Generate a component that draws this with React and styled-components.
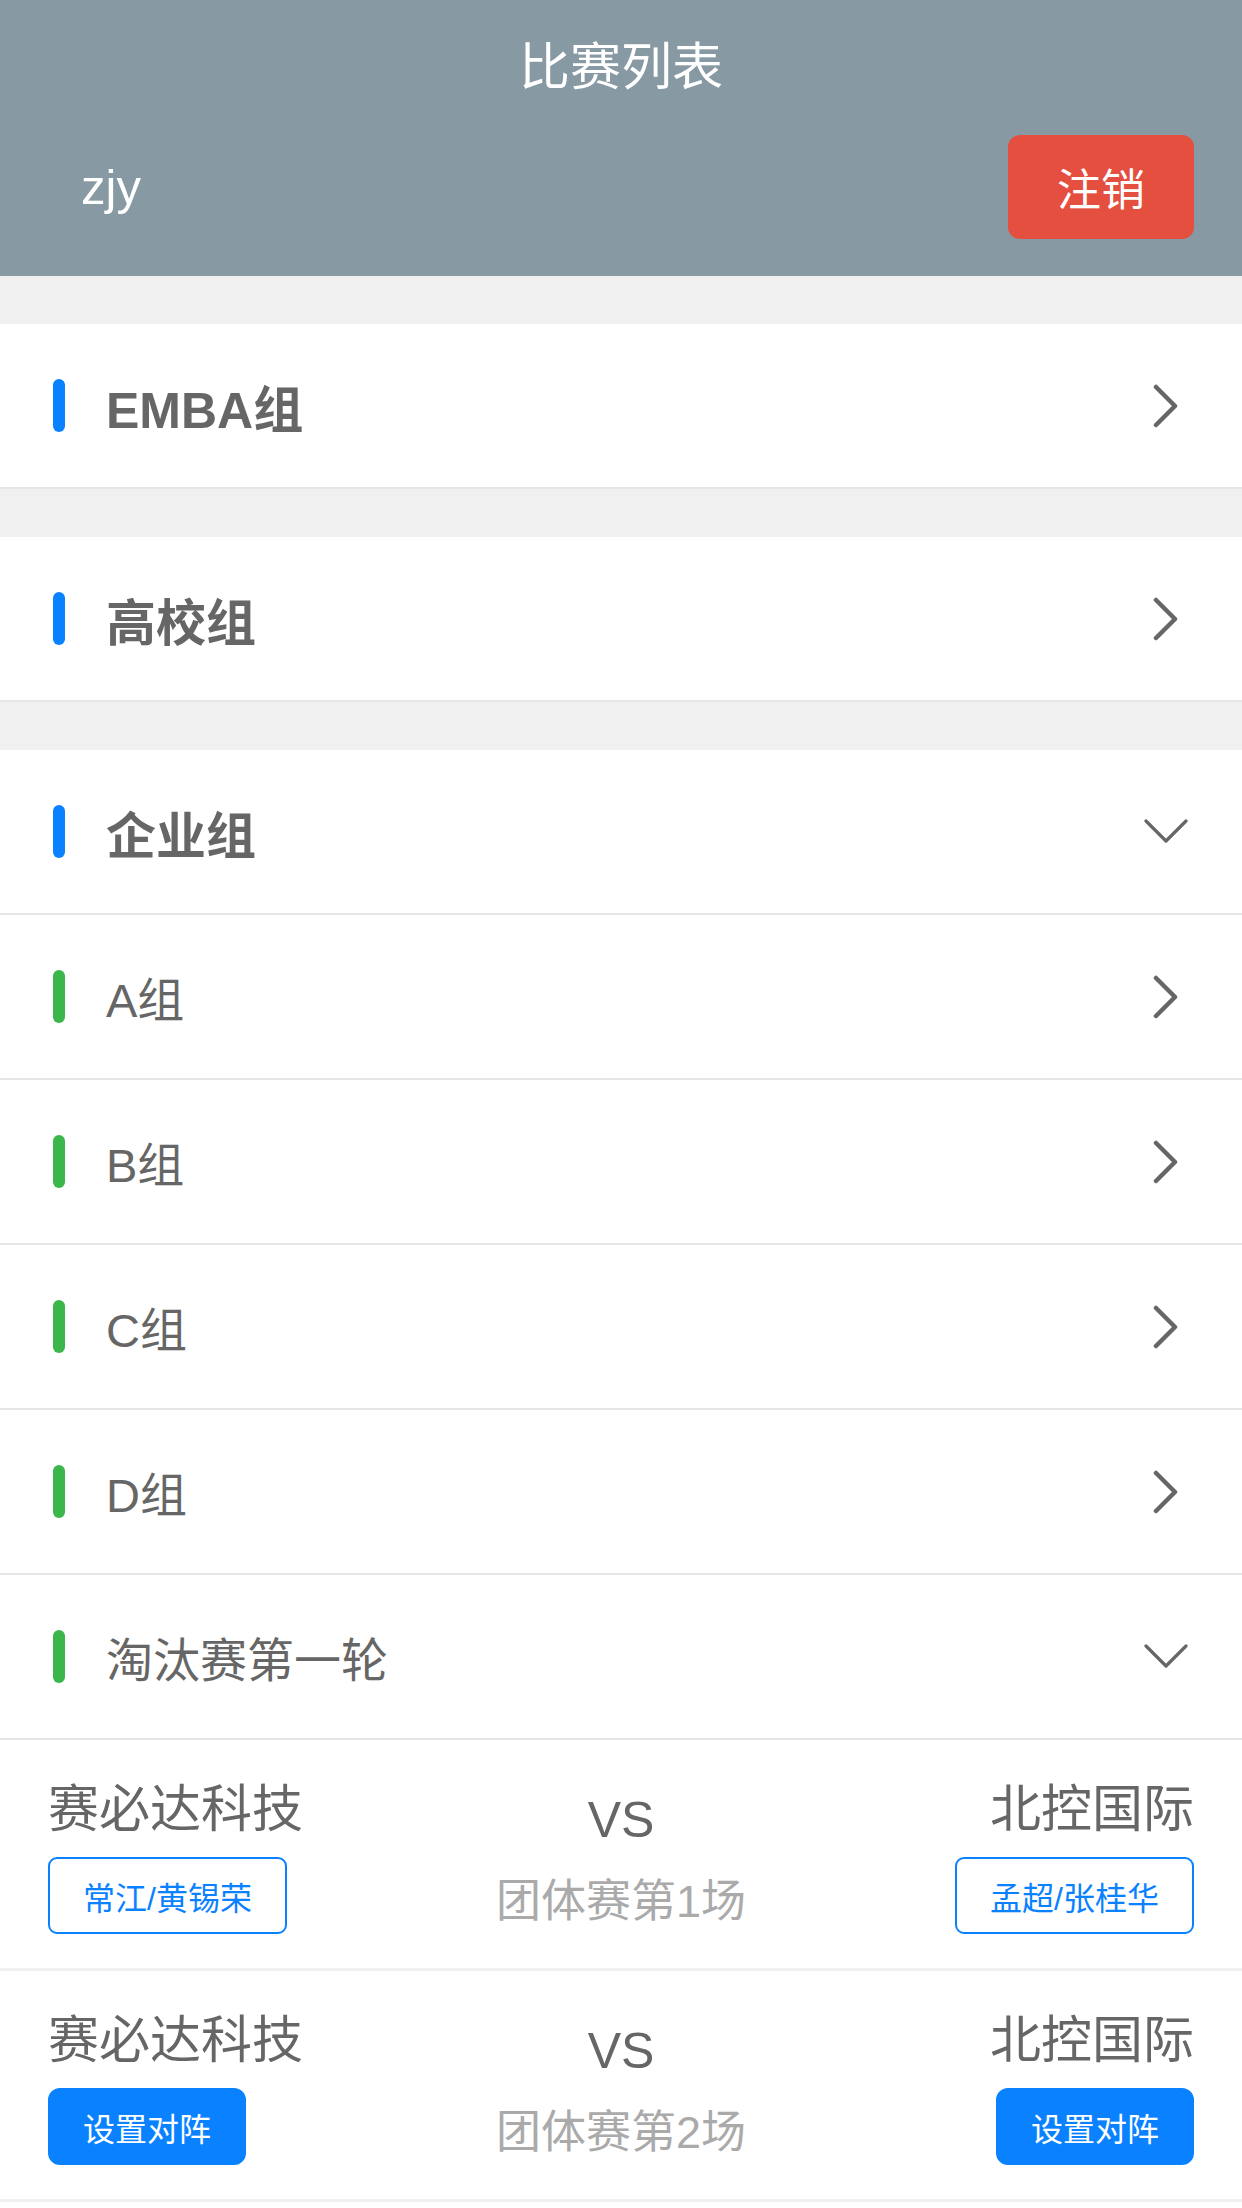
import styled, { createGlobalStyle } from 'styled-components';

const GlobalStyle = createGlobalStyle`
  * {
    box-sizing: border-box;
  }
  body {
    margin: 0;
    background: #ffffff;
    font-family: 'Liberation Sans', 'Noto Sans CJK SC', sans-serif;
  }
`;

const Header = styled.header`
  background-color: #8799a2;
  padding: 0 48px 37px;
  color: #ffffff;
`;

const Title = styled.h1`
  margin: 0;
  height: 135px;
  line-height: 135px;
  text-align: center;
  font-size: 51px;
  font-weight: 400;
`;

const UserBar = styled.div`
  display: flex;
  align-items: center;
  justify-content: space-between;
  height: 104px;
`;

const UserName = styled.div`
  margin-left: 33px;
  font-size: 49px;
`;

const LogoutButton = styled.button`
  width: 186px;
  height: 104px;
  border: none;
  border-radius: 12px;
  background-color: #e54f40;
  color: #ffffff;
  font-family: inherit;
  font-size: 44px;
  cursor: pointer;
`;

const Gap = styled.div`
  height: 48px;
  background-color: #f0f0f0;
`;

const Row = styled.div`
  display: flex;
  align-items: center;
  height: 165px;
  padding: 0 51px 0 53px;
  background-color: #ffffff;
  border-bottom: 2px solid #e6e6e6;
  cursor: pointer;
`;

const Bar = styled.span`
  width: 12px;
  height: 53px;
  border-radius: 6px;
  background-color: ${(p) => (p.$sub ? '#3bb64a' : '#0a82ff')};
`;

const RowLabel = styled.span`
  flex: 1;
  margin-left: 41px;
  color: #666666;
  font-size: ${(p) => (p.$sub ? '47px' : '50px')};
  font-weight: ${(p) => (p.$sub ? 400 : 700)};
`;

const IconBox = styled.span`
  display: flex;
  align-items: center;
  justify-content: center;
  width: 50px;
`;

const MatchRow = styled.div`
  display: grid;
  grid-template-columns: 1fr auto 1fr;
  padding: 40px 48px 34px;
  border-bottom: 3px solid #f0f0f0;
`;

const TeamCol = styled.div`
  display: flex;
  flex-direction: column;
  align-items: ${(p) => (p.$right ? 'flex-end' : 'flex-start')};
  gap: 17px;
`;

const TeamName = styled.div`
  font-size: 51px;
  line-height: 60px;
  color: #666666;
`;

const PlayerTag = styled.button`
  height: 77px;
  padding: 0 33px;
  font-family: inherit;
  font-size: 32px;
  border: 2px solid #0a82ff;
  background-color: ${(p) => (p.$filled ? '#0a82ff' : '#ffffff')};
  color: ${(p) => (p.$filled ? '#ffffff' : '#0a82ff')};
  border-radius: ${(p) => (p.$filled ? '12px' : '9px')};
  cursor: pointer;
`;

const CenterCol = styled.div`
  display: flex;
  flex-direction: column;
  align-items: center;
  padding-top: 10px;
`;

const Vs = styled.div`
  font-size: 50px;
  line-height: 60px;
  color: #666666;
`;

const MatchLabel = styled.div`
  margin-top: 25px;
  font-size: 45px;
  line-height: 54px;
  color: #aaaaaa;
`;

const ChevronRight = () => (
  <svg width="26" height="44" viewBox="0 0 26 44">
    <polyline
      points="3,3 22,22 3,41"
      fill="none"
      stroke="#666666"
      strokeWidth="4.5"
      strokeLinecap="round"
      strokeLinejoin="round"
    />
  </svg>
);

const ChevronDown = () => (
  <svg width="44" height="25" viewBox="0 0 44 25">
    <polyline
      points="2,2 22,22 42,2"
      fill="none"
      stroke="#666666"
      strokeWidth="3.2"
      strokeLinecap="round"
      strokeLinejoin="round"
    />
  </svg>
);

const subGroups = [
  { name: 'A组' },
  { name: 'B组' },
  { name: 'C组' },
  { name: 'D组' },
  { name: '淘汰赛第一轮', open: true },
];

const matches = [
  { home: '赛必达科技', away: '北控国际', homePlayers: '常江/黄锡荣', awayPlayers: '孟超/张桂华', label: '团体赛第1场' },
  { home: '赛必达科技', away: '北控国际', homePlayers: null, awayPlayers: null, label: '团体赛第2场' },
];

const ListRow = ({ name, sub, open }) => (
  <Row>
    <Bar $sub={sub} />
    <RowLabel $sub={sub}>{name}</RowLabel>
    <IconBox>{open ? <ChevronDown /> : <ChevronRight />}</IconBox>
  </Row>
);

const Match = ({ match }) => (
  <MatchRow>
    <TeamCol>
      <TeamName>{match.home}</TeamName>
      <PlayerTag $filled={!match.homePlayers}>{match.homePlayers || '设置对阵'}</PlayerTag>
    </TeamCol>
    <CenterCol>
      <Vs>VS</Vs>
      <MatchLabel>{match.label}</MatchLabel>
    </CenterCol>
    <TeamCol $right>
      <TeamName>{match.away}</TeamName>
      <PlayerTag $filled={!match.awayPlayers}>{match.awayPlayers || '设置对阵'}</PlayerTag>
    </TeamCol>
  </MatchRow>
);

const App = () => {
  return (
    <>
      <GlobalStyle />
      <Header>
        <Title>比赛列表</Title>
        <UserBar>
          <UserName>zjy</UserName>
          <LogoutButton>注销</LogoutButton>
        </UserBar>
      </Header>
      <Gap />
      <ListRow name="EMBA组" />
      <Gap />
      <ListRow name="高校组" />
      <Gap />
      <ListRow name="企业组" open />
      {subGroups.map((g) => (
        <ListRow key={g.name} name={g.name} sub open={g.open} />
      ))}
      {matches.map((m) => (
        <Match key={m.label} match={m} />
      ))}
    </>
  );
};

export default App;
